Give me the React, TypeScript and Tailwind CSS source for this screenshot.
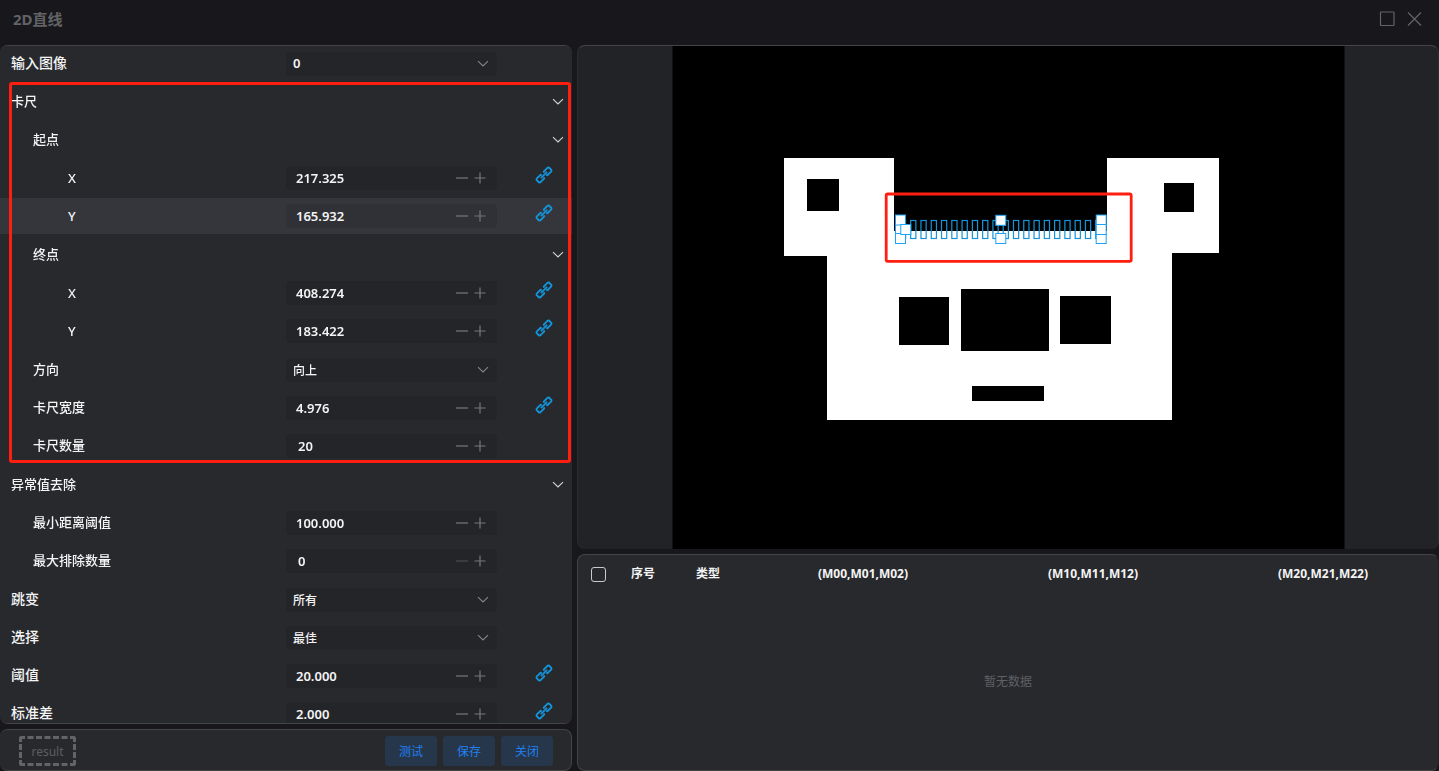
import { createContext, useContext, useId, useState, type ReactNode } from "react";

const CALIPER_COUNT = 20;
const CALIPER_START = 902.9;
const CALIPER_PITCH = 10.28;

const LevelContext = createContext(0);

function Chevron({ className }: { className: string }) {
  return (
    <svg viewBox="0 0 12 8" className={`h-2 w-3 ${className}`} fill="none" stroke="currentColor" strokeWidth="1.1" aria-hidden="true">
      <path d="M1 1.2 6 6 11 1.2" />
    </svg>
  );
}

function LinkIcon() {
  return (
    <svg viewBox="0 0 16 16" className="size-4 overflow-visible" fill="none" stroke="currentColor" strokeWidth="1.8" aria-hidden="true">
      <g transform="rotate(-45 8 8)">
        <path d="M6.4 9.5 5.7 10.6H.2L-.8 9.8V6.2L.2 5.4H5.7L6.4 6.5" />
        <path d="M9.6 9.5 10.3 10.6H15.8L16.8 9.8V6.2L15.8 5.4H10.3L9.6 6.5" />
        <path d="M3.6 8H12.4" />
      </g>
    </svg>
  );
}

function indentClass(level: number) {
  if (level === 0) return "pl-[11px]";
  if (level === 1) return "pl-[33px]";
  return "pl-[68px] pt-px";
}

function Row({ id, label, active, linked, children }: { id: string; label: string; active?: boolean; linked?: boolean; children: ReactNode }) {
  const level = useContext(LevelContext);
  return (
    <div className={`flex h-9 shrink-0 items-center ${active ? "bg-[#35363b]" : ""}`}>
      <label htmlFor={id} className={`w-1/2 shrink-0 font-medium ${indentClass(level)} ${level === 0 ? "pb-0.5 text-sm" : "text-[13px]"}`}>
        {label}
      </label>
      <div className={`flex h-6 min-w-0 flex-1 items-center rounded ${active ? "bg-[#303136]" : "bg-[#242529]"}`}>{children}</div>
      <div className="w-[75px] shrink-0 pb-1.5 pl-[39px]">
        {linked && (
          <button type="button" aria-label={`${label} 链接`} className="block text-[#1296db]">
            <LinkIcon />
          </button>
        )}
      </div>
    </div>
  );
}

function NumberRow({ label, value, active, linked, atMin }: { label: string; value: string; active?: boolean; linked?: boolean; atMin?: boolean }) {
  const id = useId();
  const decimals = value.includes(".") ? 3 : 0;
  const [text, setText] = useState(value);
  const step = (delta: number) => setText((Number(text) + delta).toFixed(decimals));
  return (
    <Row id={id} label={label} active={active} linked={linked}>
      <input
        id={id}
        value={text}
        onChange={(e) => setText(e.target.value)}
        className={`h-6 min-w-0 flex-1 bg-transparent text-[13px] font-semibold outline-none ${decimals ? "pl-2.5" : "pl-3"}`}
      />
      <div className="flex items-center gap-1.5 pr-[11px] text-[#77787b]">
        <button type="button" aria-label={`${label} 减`} disabled={atMin} onClick={() => step(-1)} className="disabled:text-[#4b4c50]">
          <svg viewBox="0 0 12 12" className="size-3" stroke="currentColor" strokeWidth="1.2" aria-hidden="true">
            <path d="M0 6H12" />
          </svg>
        </button>
        <button type="button" aria-label={`${label} 加`} onClick={() => step(1)}>
          <svg viewBox="0 0 12 12" className="size-3" stroke="currentColor" strokeWidth="1.2" aria-hidden="true">
            <path d="M.5 6H11.5M6 .5V11.5" />
          </svg>
        </button>
      </div>
    </Row>
  );
}

function SelectRow({ label, options, numeric }: { label: string; options: string[]; numeric?: boolean }) {
  const id = useId();
  return (
    <Row id={id} label={label}>
      <div className="grid flex-1 items-center">
        <select
          id={id}
          className={`col-start-1 row-start-1 h-6 w-full appearance-none bg-transparent pl-[7px] outline-none ${numeric ? "text-[13px] font-semibold" : "pt-px text-xs font-medium"}`}
        >
          {options.map((option) => (
            <option key={option} className="bg-[#242529]">
              {option}
            </option>
          ))}
        </select>
        <Chevron className="pointer-events-none col-start-1 row-start-1 mr-2 justify-self-end text-[#85868a]" />
      </div>
    </Row>
  );
}

function Group({ label, marked, children }: { label: string; marked?: boolean; children: ReactNode }) {
  const level = useContext(LevelContext);
  const [open, setOpen] = useState(true);
  return (
    <section className="relative flex shrink-0 flex-col gap-0.5 pb-px">
      <button
        type="button"
        aria-expanded={open}
        onClick={() => setOpen(!open)}
        className={`flex h-9 shrink-0 items-center justify-between pr-2 text-left text-[13px] font-medium ${indentClass(level)}`}
      >
        {label}
        <Chevron className="text-[#d6d7da]" />
      </button>
      {open && <LevelContext.Provider value={level + 1}>{children}</LevelContext.Provider>}
      {marked && <div className="pointer-events-none absolute -top-0.5 right-px bottom-0.5 left-[9px] rounded-[3px] border-3 border-[#ff1e10]" />}
    </section>
  );
}

function Handle({ x, y }: { x: number; y: number }) {
  return <rect x={x - 5} y={y - 5} width="10" height="10" fill="#fff" stroke="#1ca3f5" />;
}

function ImageView() {
  const calipers = Array.from({ length: CALIPER_COUNT }, (_, i) => CALIPER_START + i * CALIPER_PITCH);
  return (
    <svg viewBox="672 46 672 503" className="size-full" role="img" aria-label="卡尺">
      <rect x="672.5" y="46" width="672" height="503" fill="#000" />
      <path d="M784 158H894V231H1107V158H1219V253H1172V420H827V256H784Z" fill="#fff" />
      <g fill="#000">
        <rect x="807" y="179" width="32" height="32" />
        <rect x="1164" y="183" width="30" height="29" />
        <rect x="899" y="297" width="50" height="48" />
        <rect x="961" y="289" width="88" height="62" />
        <rect x="1060" y="296" width="51" height="48" />
        <rect x="972" y="386" width="72" height="15" />
      </g>
      <g fill="none" stroke="#1794d9" strokeWidth="1.2">
        {calipers.map((x) => (
          <rect key={x} x={x - 2.5} y="220.5" width="5.2" height="18" />
        ))}
      </g>
      <Handle x={900.5} y={229.5} />
      <Handle x={900.5} y={220} />
      <Handle x={900.5} y={238.5} />
      <Handle x={905.8} y={229.5} />
      <Handle x={1000.8} y={220.3} />
      <Handle x={1000.8} y={238.5} />
      <Handle x={1101.2} y={220} />
      <Handle x={1101.2} y={238.5} />
      <Handle x={1101.2} y={229.5} />
      <rect x="886.2" y="194" width="245" height="67.3" rx="1.5" fill="none" stroke="#ff1e10" strokeWidth="2.8" />
    </svg>
  );
}

const ACTIONS = ["测试", "保存", "关闭"];
const MATRIX_COLUMNS = ["(M00,M01,M02)", "(M10,M11,M12)", "(M20,M21,M22)"];

export default function App() {
  return (
    <div className="flex h-screen flex-col overflow-hidden bg-[#18181c] font-['Noto_Sans','Noto_Sans_CJK_SC',sans-serif] text-[#f4f4f5]">
      <header className="flex h-[45px] shrink-0 items-center justify-between pr-4 pb-2 pl-[13px] text-[#626367]">
        <h1 className="pt-px text-[15px] font-bold">2D直线</h1>
        <div className="flex items-center gap-3">
          <button type="button" aria-label="最大化">
            <svg viewBox="0 0 16 16" className="size-4" fill="none" stroke="currentColor" strokeWidth="1.2" aria-hidden="true">
              <rect x="1.5" y="1" width="13.5" height="13.5" rx=".5" />
            </svg>
          </button>
          <button type="button" aria-label="关闭窗口">
            <svg viewBox="0 0 16 16" className="size-4" fill="none" stroke="currentColor" strokeWidth="1.3" aria-hidden="true">
              <path d="M1 1.5 14 14.5M14 1.5 1 14.5" />
            </svg>
          </button>
        </div>
      </header>

      <main className="grid min-h-0 flex-1 grid-cols-[572fr_862fr] gap-[5px]">
        <div className="flex min-h-0 min-w-0 flex-col gap-[5px]">
          <div className="flex min-h-0 flex-1 flex-col gap-0.5 overflow-y-auto rounded-lg border-y border-[#434448] bg-[#28292d] [scrollbar-width:none]">
            <SelectRow label="输入图像" options={["0"]} numeric />
            <Group label="卡尺" marked>
              <Group label="起点">
                <NumberRow label="X" value="217.325" linked />
                <NumberRow label="Y" value="165.932" linked active />
              </Group>
              <Group label="终点">
                <NumberRow label="X" value="408.274" linked />
                <NumberRow label="Y" value="183.422" linked />
              </Group>
              <SelectRow label="方向" options={["向上"]} />
              <NumberRow label="卡尺宽度" value="4.976" linked />
              <NumberRow label="卡尺数量" value="20" />
            </Group>
            <Group label="异常值去除">
              <NumberRow label="最小距离阈值" value="100.000" />
              <NumberRow label="最大排除数量" value="0" atMin />
            </Group>
            <SelectRow label="跳变" options={["所有"]} />
            <SelectRow label="选择" options={["最佳"]} />
            <NumberRow label="阈值" value="20.000" linked />
            <NumberRow label="标准差" value="2.000" linked />
          </div>

          <footer className="flex h-[42px] shrink-0 items-center justify-between rounded-lg border border-l-0 border-[#434448] bg-[#28292d] pt-0.5 pr-[18px] pl-[19px] text-xs">
            <output className="flex h-[30px] w-[57px] items-center justify-center rounded-[3px] border-3 border-dashed border-[#636467] pt-0.5 text-[#5d5e62]">
              result
            </output>
            <div className="flex gap-1.5">
              {ACTIONS.map((action) => (
                <button key={action} type="button" className="h-[30px] w-[52px] rounded-[3px] bg-[#26364b] pt-0.5 text-[#2080f0]">
                  {action}
                </button>
              ))}
            </div>
          </footer>
        </div>

        <div className="flex min-h-0 min-w-0 flex-col gap-[5px]">
          <div className="min-h-0 flex-1 overflow-hidden rounded-lg border border-b-0 border-x-[#2c2d30] border-t-[#434448] bg-[#222326]">
            <ImageView />
          </div>

          <div className="flex h-[217px] shrink-0 flex-col rounded-lg border border-[#434448] border-r-[#1f2023] bg-[#28292d] text-xs">
            <table className="w-full table-fixed">
              <thead>
                <tr className="h-[38px]">
                  <th className="w-10">
                    <input
                      type="checkbox"
                      aria-label="全选"
                      className="mx-auto block size-[15px] appearance-none rounded-[3px] border border-[#c9cacc] checked:bg-[#2080f0]"
                    />
                  </th>
                  <th className="w-[50px]">序号</th>
                  <th className="w-20">类型</th>
                  {MATRIX_COLUMNS.map((column) => (
                    <th key={column}>{column}</th>
                  ))}
                </tr>
              </thead>
            </table>
            <p className="flex flex-1 items-center justify-center text-[#5f6064]">暂无数据</p>
          </div>
        </div>
      </main>
    </div>
  );
}
